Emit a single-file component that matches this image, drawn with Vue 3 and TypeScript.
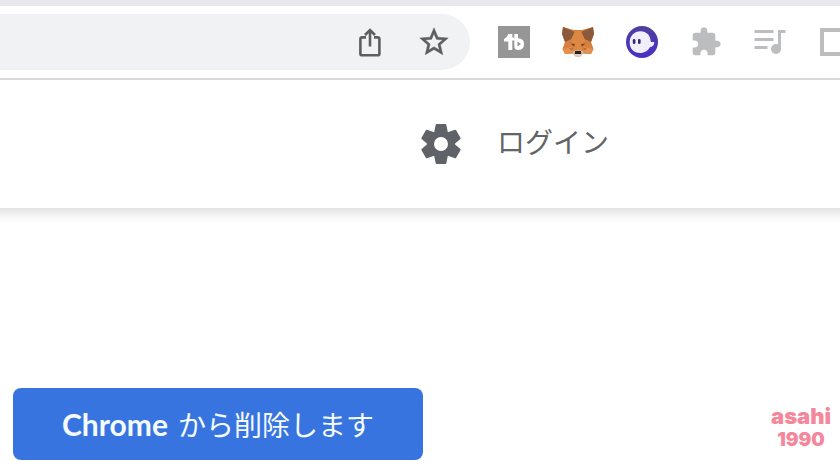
<script setup lang="ts">
const signInLabel: string = 'ログイン'
const product: string = 'Chrome'
const removeLabel: string = 'から削除します'
const author: string[] = ['asahi', '1990']
const teeth: number[] = [0, 60, 120, 180, 240, 300]
</script>

<template>
  <div class="page">
    <div class="tab-strip"></div>
    <div class="toolbar">
      <div class="omnibox">
        <button class="tool" type="button" aria-label="Share">
          <svg width="32" height="32" viewBox="0 0 32 32" fill="none" stroke="#5c5e61" stroke-width="2.6">
            <path d="M12 11.4H8.2Q6.4 11.4 6.4 13.2V27.4Q6.4 29.3 8.2 29.3H23.6Q25.4 29.3 25.4 27.4V13.2Q25.4 11.4 23.6 11.4H20" />
            <path d="M16 20.4V4.6M11 9L16 4L21 9" />
          </svg>
        </button>
        <button class="tool" type="button" aria-label="Bookmark">
          <svg width="34" height="34" viewBox="0 0 24 24" fill="#5c5e61" stroke="#5c5e61" stroke-width="0.35">
            <path d="M22 9.24l-7.19-.62L12 2 9.19 8.63 2 9.24l5.46 4.73L5.82 21 12 17.27 18.18 21l-1.63-7.03L22 9.24zM12 15.4l-3.76 2.27 1-4.28-3.32-2.88 4.38-.38L12 6.1l1.71 4.04 4.38.38-3.32 2.88 1 4.28L12 15.4z" />
          </svg>
        </button>
      </div>
      <div class="extensions">
        <button class="tool" type="button" aria-label="TubeBuddy">
          <svg width="32" height="32" viewBox="0 0 32 32">
            <rect width="32" height="32" fill="#969696" />
            <path d="M10.300 8H14.300V11.500H16.500V14.500H14.300V24H10.300V15.500H6V13Q9.500 11.500 10.300 8Z" fill="#fff" />
            <path d="M16.300 8H20V12.300Q26 12.500 26 18Q26 24 20 24Q16.300 24 16.300 20Z" fill="#fff" />
            <path d="M19.500 15.500L23 18L19.500 20.500Z" fill="#969696" />
          </svg>
        </button>
        <button class="tool" type="button" aria-label="MetaMask">
          <svg width="34" height="32" viewBox="0 0 34 32">
            <path d="M2 1L13 4H21L32 1L33 8L30 16L32.500 23L30 28L22 27.500L19.500 30.500H14.500L12 27.500L4 28L1.500 23L4 16L1 8Z" fill="#d5803f" />
            <path d="M2 1L14 6L10.500 13L4 16L1 8ZM32 1L20 6L23.500 13L30 16L33 8Z" fill="#8b5a3c" />
            <path d="M14 5H20L24 14L20 24H14L10 14Z" fill="#dc8843" />
            <path d="M1.500 23L11 21L12 27.500L4 28ZM32.500 23L23 21L22 27.500L30 28Z" fill="#e39150" />
            <path d="M9.500 17.500L14 18L13 20.500ZM24.500 17.500L20 18L21 20.500Z" fill="#74452b" />
            <path d="M8 22.500L11.500 22L11 24.500ZM26 22.500L22.500 22L23 24.500Z" fill="#b9652f" />
            <path d="M11.500 26L14 24.500H20L22.500 26L19.500 30.500H14.500Z" fill="#d9cfc8" />
            <path d="M14 25H20L20.300 28H13.700Z" fill="#25211f" />
          </svg>
        </button>
        <button class="tool" type="button" aria-label="Phantom">
          <svg width="32" height="32" viewBox="0 0 32 32">
            <defs>
              <linearGradient id="orb" x1="0" y1="0" x2="0" y2="1">
                <stop offset="0" stop-color="#4e409f" />
                <stop offset="1" stop-color="#4a2fc6" />
              </linearGradient>
            </defs>
            <circle cx="16" cy="16" r="16" fill="url(#orb)" />
            <path d="M3.700 16.500C3.700 9.500 8.500 5.200 14.500 5.200C20.500 5.200 24.500 9.500 24.700 15.200C24.800 16.600 26.600 15.600 28.300 16.200C28.300 19.200 26.300 20.800 24 21C22.200 24.800 18.500 27 14 27C7.500 27 3.700 22.500 3.700 16.500Z" fill="#f2effd" />
            <rect x="6.800" y="13" width="2.600" height="5" rx="1.300" fill="#35266f" />
            <rect x="12" y="13" width="2.600" height="5" rx="1.300" fill="#35266f" />
          </svg>
        </button>
        <button class="tool" type="button" aria-label="Extensions">
          <svg width="32" height="32" viewBox="0 0 24 24" fill="#bcbdbf">
            <path d="M20.500 11H19V7c0-1.100-.9-2-2-2h-4V3.500C13 2.120 11.880 1 10.500 1S8 2.120 8 3.500V5H4c-1.100 0-1.990.9-1.990 2v3.800H3.500c1.490 0 2.700 1.210 2.700 2.700s-1.210 2.700-2.700 2.700H2V20c0 1.100.9 2 2 2h3.800v-1.500c0-1.490 1.210-2.700 2.700-2.700 1.490 0 2.700 1.210 2.700 2.700V22H17c1.100 0 2-.9 2-2v-4h1.500c1.380 0 2.500-1.120 2.500-2.500S21.880 11 20.500 11z" />
          </svg>
        </button>
        <button class="tool" type="button" aria-label="Media">
          <svg width="32" height="32" viewBox="0 0 32 32" fill="none" stroke="#bcbdbf" stroke-width="3">
            <path d="M0.500 5.500H19.500M0.500 13.500H19.500M0.500 21.500H13.500" />
            <path d="M25.500 23V5.500H31.500" />
            <circle cx="22" cy="23" r="5" fill="#bcbdbf" stroke="none" />
          </svg>
        </button>
        <button class="tool edge" type="button" aria-label="Side panel">
          <svg width="28" height="28" viewBox="0 0 28 28" fill="none" stroke="#bcbdbf" stroke-width="4">
            <rect x="2" y="2" width="24" height="24" />
          </svg>
        </button>
      </div>
    </div>
    <header class="site-header">
      <button class="gear" type="button" aria-label="Settings">
        <svg width="48" height="48" viewBox="-24 -24 48 48" fill="#5f6368">
          <path v-for="angle in teeth" :key="angle" :transform="`rotate(${angle})`" d="M-7 -11L-5.300 -19.300Q-5.100 -20 -4.300 -20H4.300Q5.100 -20 5.300 -19.300L7 -11Z" />
          <circle r="10.200" fill="none" stroke="#5f6368" stroke-width="6.400" />
        </svg>
      </button>
      <a class="sign-in" href="#">{{ signInLabel }}</a>
    </header>
    <main class="content">
      <button class="remove" type="button"><strong>{{ product }}</strong><span>{{ removeLabel }}</span></button>
      <p class="author"><span class="name">{{ author[0] }}</span><span class="year">{{ author[1] }}</span></p>
    </main>
  </div>
</template>

<style>
body {
  background: #fff;
  overflow-x: hidden;
}
</style>

<style scoped>
.page {
  font-family: "Noto Sans CJK JP", sans-serif;
  color: #5f6368;
}
button {
  border: 0;
  padding: 0;
  background: none;
  font: inherit;
  cursor: pointer;
}
svg {
  display: block;
}
.tab-strip {
  height: 6px;
  background: #e8e7ee;
}
.toolbar {
  display: flex;
  gap: 12px;
  padding: 8px 0;
  border-bottom: 2px solid #dadada;
}
.omnibox {
  flex: 1;
  display: flex;
  justify-content: flex-end;
  height: 56px;
  padding-right: 4px;
  border-radius: 0 28px 28px 0;
  background: #f1f2f4;
}
.extensions {
  display: flex;
}
.tool {
  width: 64px;
  height: 56px;
  display: flex;
  align-items: center;
  justify-content: center;
}
.edge {
  width: 38px;
  padding-left: 18px;
  justify-content: flex-start;
  overflow: hidden;
}
.edge svg {
  flex: none;
}
.site-header {
  display: flex;
  align-items: center;
  justify-content: flex-end;
  gap: 32px;
  height: 128px;
  padding-right: 231px;
}
.gear circle {
  fill: #fff;
}
.sign-in {
  font-size: 28px;
  line-height: 40px;
  padding-bottom: 6px;
  color: #626466;
  text-decoration: none;
}
.content {
  display: flex;
  align-items: flex-start;
  justify-content: space-between;
  padding: 180px 9px 0 13px;
  background: linear-gradient(#e2e2e2, #f6f6f6 8px, #fff 16px);
}
.remove {
  display: flex;
  align-items: center;
  gap: 10px;
  height: 72px;
  padding: 0 49px;
  border-radius: 8px;
  background: #3874e0;
  color: #f4fbff;
  font-size: 28px;
  line-height: 40px;
  white-space: nowrap;
}
.remove strong {
  font-family: Lato, sans-serif;
  font-size: 30px;
  font-weight: 700;
}
.author {
  display: flex;
  flex-direction: column;
  align-items: center;
  margin: 16px 0 0;
  font-family: Inter, sans-serif;
  font-weight: 900;
  color: #f4879c;
}
.name,
.year {
  line-height: 24px;
}
.name {
  font-size: 22px;
}
.year {
  font-size: 19px;
}
</style>
